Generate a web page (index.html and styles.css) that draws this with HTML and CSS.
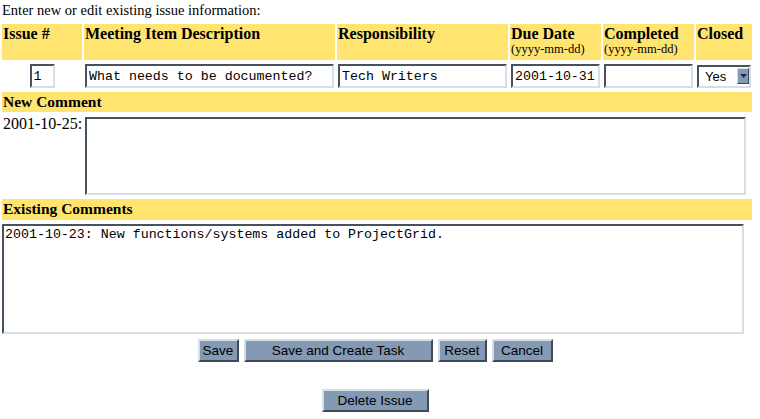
FILE: index.html
```html
<!DOCTYPE html>
<html lang="en">
<head>
  <meta charset="UTF-8" />
  <title>Edit Issue</title>
  <link rel="stylesheet" href="styles.css">
</head>
<body>
  <p class="intro">Enter new or edit existing issue information:</p>

  <form class="issue">
    <div class="head">Issue #</div>
    <div class="head">Meeting Item Description</div>
    <div class="head">Responsibility</div>
    <div class="head">Due Date<br><small>(yyyy-mm-dd)</small></div>
    <div class="head">Completed<br><small>(yyyy-mm-dd)</small></div>
    <div class="head">Closed</div>

    <div class="cell center"><input type="text" class="num" value="1"></div>
    <div class="cell"><input type="text" value="What needs to be documented?"></div>
    <div class="cell"><input type="text" value="Tech Writers"></div>
    <div class="cell"><input type="text" value="2001-10-31"></div>
    <div class="cell"><input type="text" value=""></div>
    <div class="cell">
      <div class="select">
        <select>
          <option>Yes</option>
          <option>No</option>
        </select>
        <span class="arrow">
          <svg width="7" height="4" viewBox="0 0 7 4"><path d="M0 0h7L3.5 4z" fill="#24245a"/></svg>
        </span>
      </div>
    </div>

    <div class="bar">New Comment</div>
    <div class="label">2001-10-25:</div>
    <div class="span5"><textarea class="nuevo"></textarea></div>

    <div class="bar">Existing Comments</div>
    <div class="full"><textarea class="existente">2001-10-23: New functions/systems added to ProjectGrid.</textarea></div>
  </form>

  <div class="botones">
    <button type="button" class="b-save">Save</button>
    <button type="button" class="b-task">Save and Create Task</button>
    <button type="button" class="b-reset">Reset</button>
    <button type="button" class="b-cancel">Cancel</button>
  </div>

  <div class="botones borrar">
    <button type="button" class="b-delete">Delete Issue</button>
  </div>
</body>
</html>
```

FILE: styles.css
```css
body {
  margin: 0;
  font-family: "Liberation Serif", "Times New Roman", serif;
  background-color: #ffffff;
  color: #000;
}

.intro {
  margin: 0;
  padding: 2px 2px 0;
  height: 20px;
  font-size: 14.5px;
  line-height: 17px;
}

.issue {
  display: grid;
  grid-template-columns: 80px 251px 171px 91px 91px 56px;
  gap: 2px;
  padding: 2px;
  width: 754px;
  box-sizing: border-box;
}

.head {
  background-color: #ffe570;
  height: 36px;
  padding: 1px;
  box-sizing: border-box;
  font-size: 16px;
  font-weight: bold;
  line-height: 18px;
}

.head small {
  display: block;
  font-size: 12.5px;
  font-weight: normal;
  line-height: 13px;
}

.cell {
  height: 28px;
  padding: 1px;
  box-sizing: border-box;
  display: flex;
  align-items: center;
}

.center {
  justify-content: center;
}

input[type="text"],
textarea {
  font-family: "Liberation Mono", "Courier New", monospace;
  font-size: 13.3px;
  border-style: solid;
  border-width: 2px;
  border-color: #47525e #d6dee6 #d6dee6 #47525e;
  background: #fff;
  margin: 0;
  box-sizing: border-box;
  outline: none;
}

input[type="text"] {
  width: 100%;
  height: 24px;
  padding: 0 2px;
}

input.num {
  width: 25px;
}

.select {
  position: relative;
  width: 54px;
  height: 23px;
  margin-top: 1px;
}

.select select {
  appearance: none;
  width: 100%;
  height: 100%;
  margin: 0;
  padding: 0 0 0 6px;
  border-style: solid;
  border-width: 2px;
  border-color: #47525e #d6dee6 #d6dee6 #47525e;
  background: #fff;
  font-family: "Liberation Sans", Arial, sans-serif;
  font-size: 13px;
  color: #000;
  border-radius: 0;
}

.select .arrow {
  position: absolute;
  top: 3px;
  right: 2px;
  width: 12px;
  height: 16px;
  box-sizing: border-box;
  background-color: #8399b4;
  border-style: solid;
  border-width: 1px;
  border-color: #d6dee6 #3e4a57 #3e4a57 #d6dee6;
  display: flex;
  align-items: center;
  justify-content: center;
  pointer-events: none;
}

.bar {
  grid-column: 1 / -1;
  background-color: #ffe570;
  height: 20px;
  padding: 0 1px;
  font-size: 15.5px;
  font-weight: bold;
  line-height: 19px;
}

.bar ~ .bar {
  height: 21px;
}

.label {
  padding: 1px;
  font-size: 16px;
  line-height: 18px;
  white-space: nowrap;
}

.span5 {
  grid-column: 2 / -1;
  padding: 3px 1px 2px;
}

.nuevo {
  display: block;
  width: 661px;
  height: 78px;
  resize: none;
}

.full {
  grid-column: 1 / -1;
  padding-top: 2px;
}

.existente {
  display: block;
  width: 742px;
  height: 110px;
  padding: 1px;
  resize: none;
  line-height: 16px;
}

.botones {
  width: 750px;
  display: flex;
  justify-content: center;
  gap: 5px;
  margin-top: 3px;
}

.borrar {
  margin-top: 27px;
}

.botones button {
  font-family: "Liberation Sans", Arial, sans-serif;
  font-size: 13.5px;
  color: #000;
  height: 23px;
  padding: 0;
  background-color: #8399b4;
  border-style: solid;
  border-width: 2px;
  border-color: #d6dee6 #3e4a57 #3e4a57 #d6dee6;
  cursor: pointer;
}

.b-save { width: 41px; }
.b-task { width: 189px; }
.b-reset { width: 49px; }
.b-cancel { width: 61px; }
.b-delete { width: 107px; }
```
